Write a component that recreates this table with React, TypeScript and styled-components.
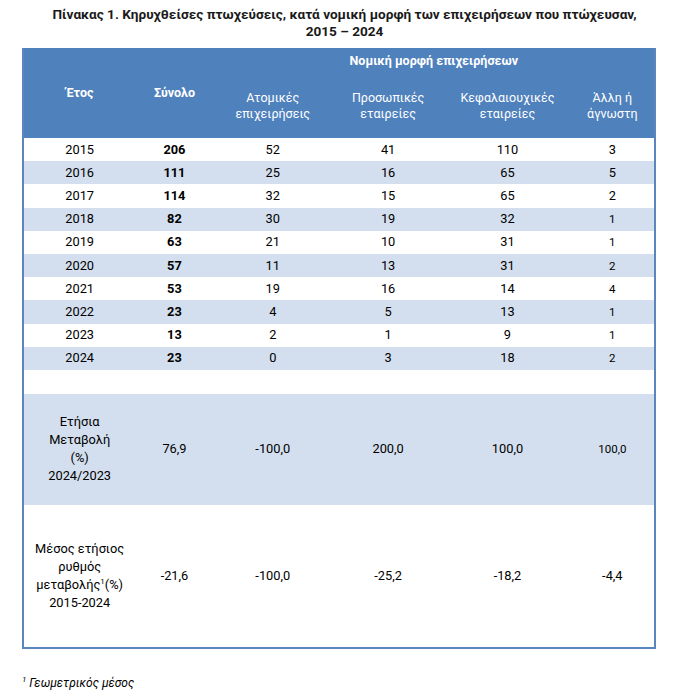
import React from 'react'
import styled, { createGlobalStyle } from 'styled-components'

const GlobalStyle = createGlobalStyle`
  body {
    margin: 0;
    background: #ffffff;
    font-family: Roboto, "Noto Sans", "Liberation Sans", sans-serif;
    color: #000;
  }
`

const Page = styled.div`
  width: 689px;
  height: 698px;
  padding: 6px 0 0 22px;
  box-sizing: border-box;
`

const Title = styled.h1`
  margin: 0 0 8px -22px;
  width: 689px;
  text-align: center;
  font-size: 13.6px;
  line-height: 17px;
  font-weight: 700;
  color: #1a1a1a;
`

const Table = styled.table`
  width: 634px;
  table-layout: fixed;
  border-collapse: collapse;
  border: 2px solid #5a86bd;
  border-top: none;
  font-size: 12.5px;
`

const HeadCell = styled.th<{ $bold?: boolean }>`
  background: #4f81bd;
  color: #fff;
  font-weight: ${p => (p.$bold ? 700 : 400)};
  text-align: center;
  vertical-align: middle;
  line-height: 16px;
  padding: 0;
`

const Row = styled.tr<{ $band?: boolean; $h: number }>`
  background: ${p => (p.$band ? '#d3dfee' : '#ffffff')};
  height: ${p => p.$h}px;
`

const Cell = styled.td<{ $bold?: boolean; $small?: boolean }>`
  text-align: center;
  vertical-align: middle;
  padding: 0;
  font-weight: ${p => (p.$bold ? 700 : 400)};
  font-size: ${p => (p.$small ? '11.5px' : '12.8px')};
  line-height: 18px;
`

const Sup = styled.sup`
  font-size: 8px;
  vertical-align: 5px;
  line-height: 0;
`

const Note = styled.p`
  margin: 27px 0 0;
  font-size: 12px;
  font-style: italic;
`

const years: [string, string, string, string, string, string][] = [
  ['2015', '206', '52', '41', '110', '3'],
  ['2016', '111', '25', '16', '65', '5'],
  ['2017', '114', '32', '15', '65', '2'],
  ['2018', '82', '30', '19', '32', '1'],
  ['2019', '63', '21', '10', '31', '1'],
  ['2020', '57', '11', '13', '31', '2'],
  ['2021', '53', '19', '16', '14', '4'],
  ['2022', '23', '4', '5', '13', '1'],
  ['2023', '13', '2', '1', '9', '1'],
  ['2024', '23', '0', '3', '18', '2'],
]

export default function App() {
  return (
    <Page>
      <GlobalStyle />
      <Title>
        Πίνακας 1. Κηρυχθείσες πτωχεύσεις, κατά νομική μορφή των επιχειρήσεων που πτώχευσαν,
        <br />
        2015 – 2024
      </Title>
      <Table>
        <colgroup>
          <col style={{ width: 112 }} />
          <col style={{ width: 78 }} />
          <col style={{ width: 118 }} />
          <col style={{ width: 112 }} />
          <col style={{ width: 126 }} />
          <col style={{ width: 84 }} />
        </colgroup>
        <thead>
          <tr style={{ height: 26 }}>
            <HeadCell $bold rowSpan={2}>Έτος</HeadCell>
            <HeadCell $bold rowSpan={2}>Σύνολο</HeadCell>
            <HeadCell $bold colSpan={4}>Νομική μορφή επιχειρήσεων</HeadCell>
          </tr>
          <tr style={{ height: 64 }}>
            <HeadCell>Ατομικές<br />επιχειρήσεις</HeadCell>
            <HeadCell>Προσωπικές<br />εταιρείες</HeadCell>
            <HeadCell>Κεφαλαιουχικές<br />εταιρείες</HeadCell>
            <HeadCell>Άλλη ή<br />άγνωστη</HeadCell>
          </tr>
        </thead>
        <tbody>
          {years.map((r, i) => (
            <Row key={r[0]} $band={i % 2 === 1} $h={23.2}>
              <Cell>{r[0]}</Cell>
              <Cell $bold>{r[1]}</Cell>
              <Cell>{r[2]}</Cell>
              <Cell>{r[3]}</Cell>
              <Cell>{r[4]}</Cell>
              <Cell $small={i > 2}>{r[5]}</Cell>
            </Row>
          ))}
          <Row $h={24}>
            <Cell colSpan={6} />
          </Row>
          <Row $band $h={111}>
            <Cell>Ετήσια<br />Μεταβολή<br />(%)<br />2024/2023</Cell>
            <Cell>76,9</Cell>
            <Cell>-100,0</Cell>
            <Cell>200,0</Cell>
            <Cell>100,0</Cell>
            <Cell $small>100,0</Cell>
          </Row>
          <Row $h={143}>
            <Cell>Μέσος ετήσιος<br />ρυθμός<br />μεταβολής<Sup>1</Sup>(%)<br />2015-2024</Cell>
            <Cell>-21,6</Cell>
            <Cell>-100,0</Cell>
            <Cell>-25,2</Cell>
            <Cell>-18,2</Cell>
            <Cell>-4,4</Cell>
          </Row>
        </tbody>
      </Table>
      <Note><Sup>1</Sup> Γεωμετρικός μέσος</Note>
    </Page>
  )
}
